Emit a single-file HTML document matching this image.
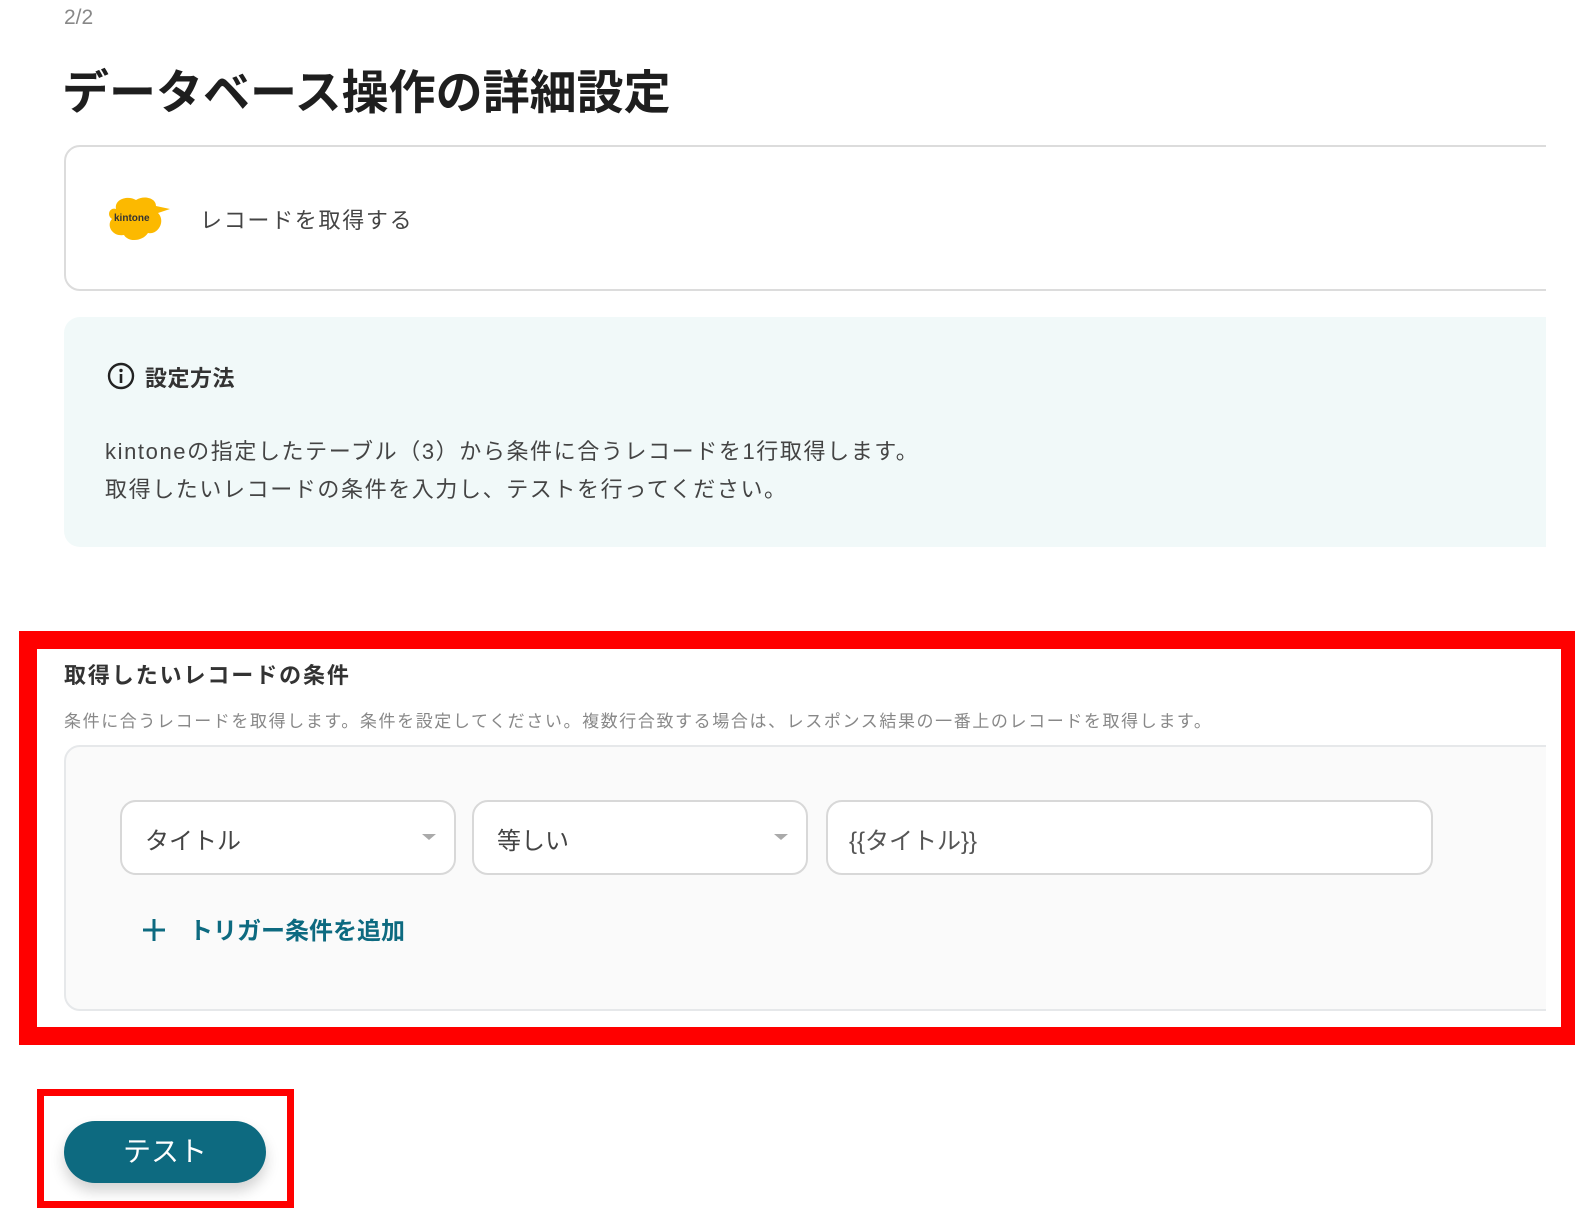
<!DOCTYPE html>
<html><head><meta charset="utf-8"><style>
*{margin:0;padding:0;box-sizing:border-box}
body{width:1575px;height:1211px;background:#fff;position:relative;overflow:hidden;font-family:"Liberation Sans","Noto Sans CJK JP",sans-serif;color:#333}
.a{position:absolute;white-space:nowrap}
.clip{position:absolute;left:0;top:0;width:1546px;height:1211px;overflow:hidden}
</style></head><body>
<div class="a" style="left:64px;top:6px;font-size:21px;color:#888">2/2</div>
<div class="a" style="left:62px;top:54px;font-size:47px;font-weight:bold;color:#1e1e1e">データベース操作の詳細設定</div>

<div class="clip">
<div class="a" style="left:64px;top:145px;width:1560px;height:146px;border:2px solid #dcdcdc;border-radius:16px;background:#fff"></div>
<div class="a" style="left:64px;top:317px;width:1560px;height:230px;border-radius:16px;background:#f1f9f9"></div>
<div class="a" style="left:64px;top:745px;width:1560px;height:266px;border:2px solid #e6e8ea;border-radius:16px;background:#fafafa"></div>
</div>
<svg class="a" style="left:106px;top:195px" width="68" height="48" viewBox="0 0 68 48">
<path d="M10 14 C8 4 22 0 30 5 C38 0 50 3 50 11 L64 14 L52 18 C60 26 52 40 42 38 C36 47 22 47 18 40 C6 42 0 30 6 24 C0 20 4 12 10 14Z" fill="#fcb900"/>
<text x="8" y="26" font-size="10" font-weight="bold" font-family="Liberation Sans" fill="#333">kintone</text>
</svg>
<div class="a" style="left:200px;top:203px;font-size:22px;color:#444;letter-spacing:1.7px">レコードを取得する</div>

<svg class="a" style="left:107px;top:362px" width="28" height="28" viewBox="0 0 28 28"><circle cx="14" cy="14" r="12" fill="none" stroke="#222" stroke-width="2.4"/><circle cx="14" cy="8.5" r="1.7" fill="#222"/><rect x="12.7" y="12" width="2.6" height="9" fill="#222"/></svg>
<div class="a" style="left:145px;top:361px;font-size:22px;font-weight:bold;color:#333;letter-spacing:0.5px">設定方法</div>
<div class="a" style="left:105px;top:433px;font-size:22px;color:#444;line-height:38px;letter-spacing:1.6px">kintoneの指定したテーブル（3）から条件に合うレコードを1行取得します。<br>取得したいレコードの条件を入力し、テストを行ってください。</div>

<div class="a" style="left:19px;top:631px;width:1560px;height:414px;border:18px solid #f00"></div>
<div class="a" style="left:64px;top:658px;font-size:22px;font-weight:bold;color:#333;letter-spacing:1.9px">取得したいレコードの条件</div>
<div class="a" style="left:64px;top:707px;font-size:17px;color:#888;letter-spacing:1.6px">条件に合うレコードを取得します。条件を設定してください。複数行合致する場合は、レスポンス結果の一番上のレコードを取得します。</div>
<div class="a" style="left:120px;top:800px;width:336px;height:75px;border:2px solid #d8d8d8;border-radius:16px;background:#fff"></div>
<div class="a" style="left:145px;top:821px;font-size:24px;color:#444">タイトル</div>
<div class="a" style="left:422px;top:834px;width:0;height:0;border-left:7px solid transparent;border-right:7px solid transparent;border-top:6px solid #aaa"></div>
<div class="a" style="left:472px;top:800px;width:336px;height:75px;border:2px solid #d8d8d8;border-radius:16px;background:#fff"></div>
<div class="a" style="left:497px;top:821px;font-size:24px;color:#444">等しい</div>
<div class="a" style="left:774px;top:834px;width:0;height:0;border-left:7px solid transparent;border-right:7px solid transparent;border-top:6px solid #aaa"></div>
<div class="a" style="left:826px;top:800px;width:607px;height:75px;border:2px solid #d8d8d8;border-radius:16px;background:#fff"></div>
<div class="a" style="left:849px;top:821px;font-size:24px;color:#555">{{タイトル}}</div>
<svg class="a" style="left:142px;top:918px" width="24" height="24" viewBox="0 0 24 24"><path d="M12 1V23M1 12H23" stroke="#0d6a80" stroke-width="3"/></svg>
<div class="a" style="left:189px;top:911px;font-size:24px;font-weight:bold;color:#0d6a80">トリガー条件を追加</div>

<div class="a" style="left:37px;top:1089px;width:257px;height:119px;border:7px solid #f00"></div>
<div class="a" style="left:64px;top:1121px;width:202px;height:62px;border-radius:31px;background:#0d6a80;box-shadow:0 8px 14px rgba(0,0,0,0.18);color:#fff;font-size:28px;text-align:center;line-height:62px">テスト</div>
</body></html>
